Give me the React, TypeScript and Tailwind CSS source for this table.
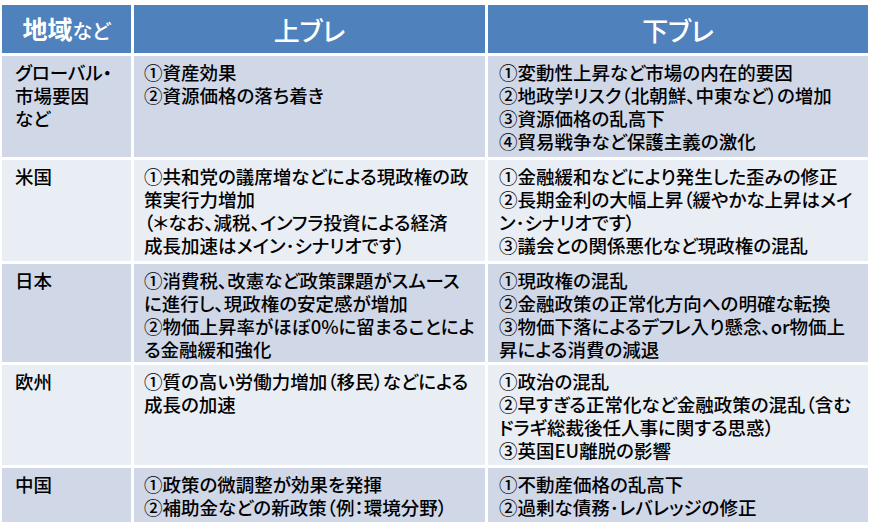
import React from "react"

type Row = { region: string[]; up: string[]; down: string[]; dark: boolean }

const rows: Row[] = [
  {
    region: ["グローバル・", "市場要因", "など"],
    up: ["①資産効果", "②資源価格の落ち着き"],
    down: [
      "①変動性上昇など市場の内在的要因",
      "②地政学リスク（北朝鮮、中東など）の増加",
      "③資源価格の乱高下",
      "④貿易戦争など保護主義の激化",
    ],
    dark: true,
  },
  {
    region: ["米国"],
    up: [
      "①共和党の議席増などによる現政権の政",
      "策実行力増加",
      "（＊なお、減税、インフラ投資による経済",
      "成長加速はメイン･シナリオです）",
    ],
    down: [
      "①金融緩和などにより発生した歪みの修正",
      "②長期金利の大幅上昇（緩やかな上昇はメイ",
      "ン･シナリオです）",
      "③議会との関係悪化など現政権の混乱",
    ],
    dark: false,
  },
  {
    region: ["日本"],
    up: [
      "①消費税、改憲など政策課題がスムース",
      "に進行し、現政権の安定感が増加",
      "②物価上昇率がほぼ0%に留まることによ",
      "る金融緩和強化",
    ],
    down: [
      "①現政権の混乱",
      "②金融政策の正常化方向への明確な転換",
      "③物価下落によるデフレ入り懸念、or物価上",
      "昇による消費の減退",
    ],
    dark: true,
  },
  {
    region: ["欧州"],
    up: ["①質の高い労働力増加（移民）などによる", "成長の加速"],
    down: [
      "①政治の混乱",
      "②早すぎる正常化など金融政策の混乱（含む",
      "ドラギ総裁後任人事に関する思惑）",
      "③英国EU離脱の影響",
    ],
    dark: false,
  },
  {
    region: ["中国"],
    up: ["①政策の微調整が効果を発揮", "②補助金などの新政策（例：環境分野）"],
    down: ["①不動産価格の乱高下", "②過剰な債務･レバレッジの修正"],
    dark: true,
  },
]

function Lines({ lines }: { lines: string[] }) {
  return (
    <>
      {lines.map((l, i) => (
        <div key={i} className="whitespace-nowrap h-[23px] leading-[23px]">
          {l}
        </div>
      ))}
    </>
  )
}

export default function App() {
  return (
    <div className="w-[870px] h-[528px] bg-white pt-[5px] pl-[2px] font-['Noto_Sans_CJK_JP',sans-serif] text-black [font-feature-settings:'palt']">
      <div className="grid grid-cols-[129px_351px_380px] grid-rows-[48px_101px_101px_98px_100px_54px] gap-[3px]">
        <div className="bg-[#4F81BD] text-white flex items-center justify-center">
          <span className="text-[25px] font-bold">地域</span>
          <span className="text-[20px] font-medium mt-[3px]">など</span>
        </div>
        <div className="bg-[#4F81BD] text-white flex items-center justify-center text-[26px] font-medium">上ブレ</div>
        <div className="bg-[#4F81BD] text-white flex items-center justify-center text-[26px] font-medium">下ブレ</div>

        {rows.map((r, i) => {
          const bg = r.dark ? "bg-[#D0D8E8]" : "bg-[#E9EDF4]"
          return (
            <React.Fragment key={i}>
              <div className={`${bg} pl-[13px] pt-[5px] text-[18.5px] font-medium`}>
                <Lines lines={r.region} />
              </div>
              <div className={`${bg} pl-[10px] pt-[5px] text-[18.5px] font-medium`}>
                <Lines lines={r.up} />
              </div>
              <div className={`${bg} pl-[11px] pt-[5px] text-[18.5px] font-medium`}>
                <Lines lines={r.down} />
              </div>
            </React.Fragment>
          )
        })}
      </div>
    </div>
  )
}
